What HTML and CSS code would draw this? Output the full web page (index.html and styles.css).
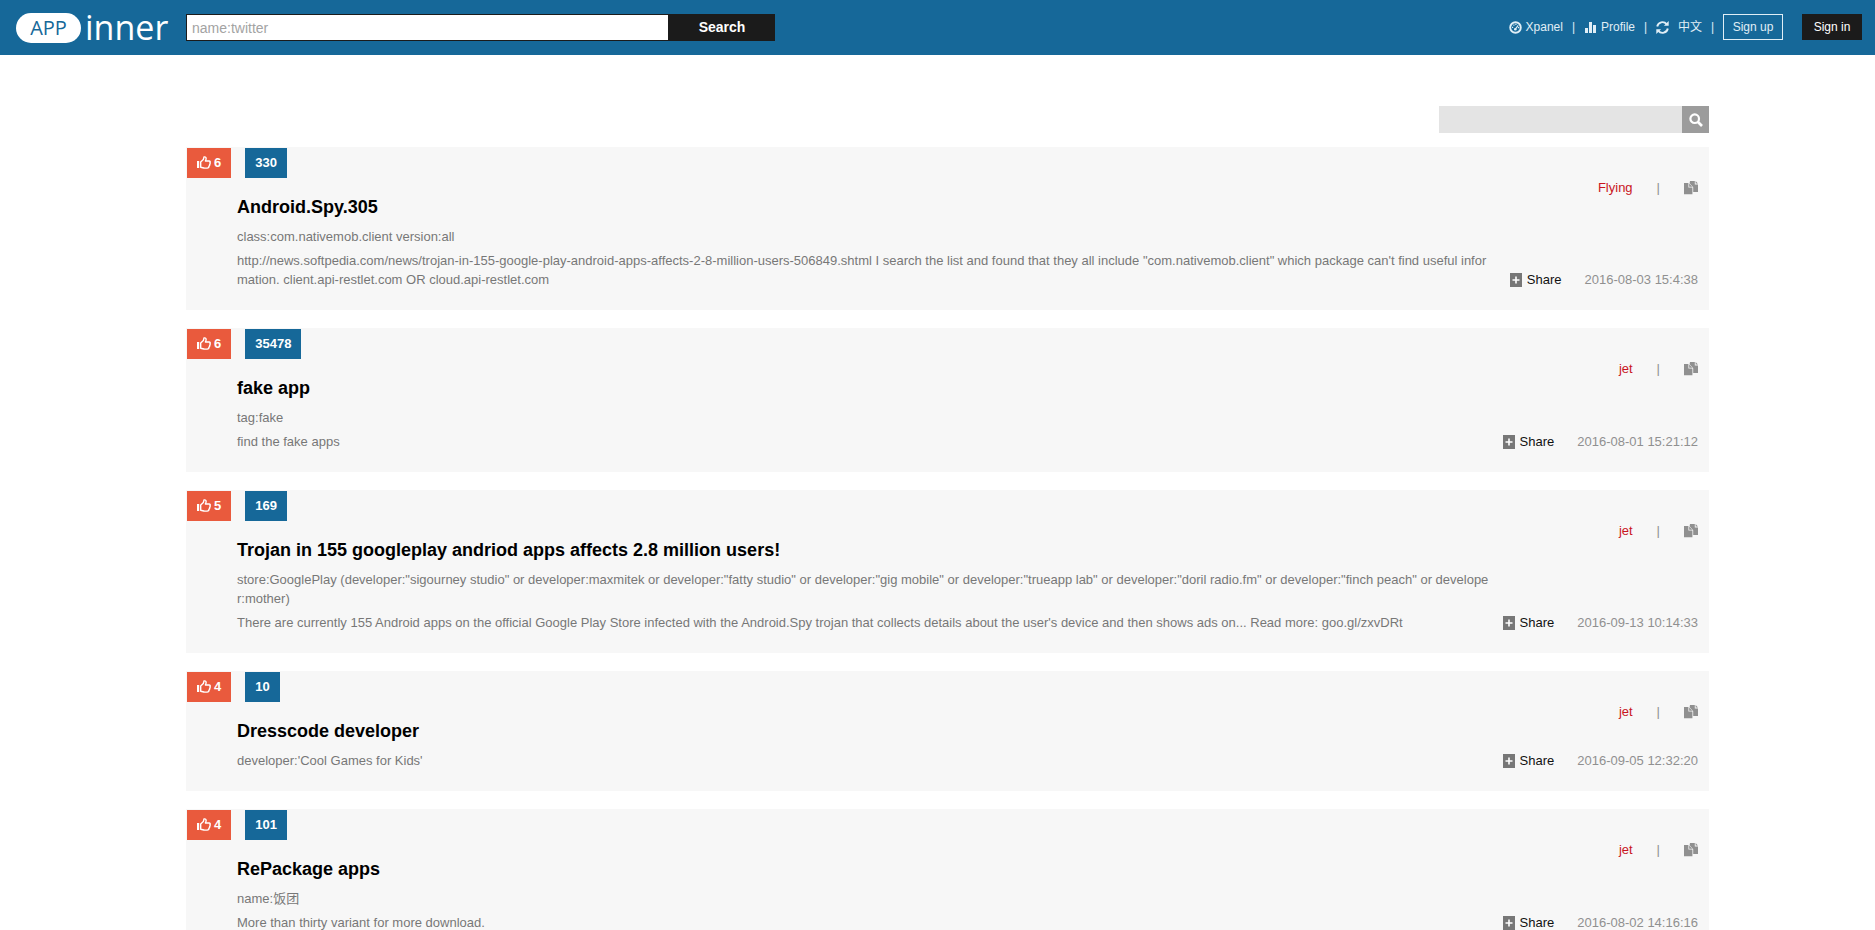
FILE: index.html
```html
<!DOCTYPE html>
<html lang="en">
<head>
<meta charset="utf-8">
<title>APP inner</title>
<link rel="stylesheet" href="styles.css">
</head>
<body>
<svg class="sprite" aria-hidden="true">
  <symbol id="i-thumb" viewBox="0 0 14 13"><path fill="currentColor" d="M0 5h2.200v7H0z"/><path fill="none" stroke="currentColor" stroke-width="1.400" stroke-linejoin="round" d="M3.700 6 6.300 3.600 7 1C8.700.600 9.400 1.800 9 3.300L8.400 5h3.700c1.200 0 1.400 1.200.8 1.800.4.600.2 1.400-.3 1.700.2.700 0 1.300-.600 1.600 0 1.400-.700 2-1.800 2H7.600C6.200 12 5.400 11.400 3.700 11.300z"/></symbol>
  <symbol id="i-copy" viewBox="0 0 14 14"><path fill="#909090" d="M6 0h4.800v3.400H14V11H9.200V6.200L5.600 2.200z"/><path fill="#909090" d="M11.600 0 14 2.600h-2.400z"/><path fill="#909090" d="M0 2h4.400v4.600h4V13.300H0z"/><path fill="#909090" d="m5.200 2.500 3.200 3.300H5.200z"/></symbol>
  <symbol id="i-plus" viewBox="0 0 12 14"><path fill="#777" d="M0 0h12v14H0z"/><path fill="#fff" d="M5.200 3.500h1.600v2.700h2.700v1.600H6.800v2.700H5.200V7.800H2.500V6.200h2.700z"/></symbol>
</svg>

<header class="topbar">
  <a class="logo" href="#"><span class="logo-pill">APP</span><span class="logo-word">inner</span></a>
  <form class="search">
    <input class="search-input" type="text" aria-label="Search apps" placeholder="name:twitter">
    <button class="search-button" type="submit">Search</button>
  </form>
  <nav class="nav">
    <a class="nav-link" href="#"><svg class="nav-icon" viewBox="0 0 13 13"><circle cx="6.500" cy="6.500" r="5.300" fill="none" stroke="currentColor" stroke-width="1.900"/><path d="M6 8.500 9.200 4.300" stroke="currentColor" stroke-width="1.200"/><circle cx="6.300" cy="8.300" r="1.300" fill="currentColor"/><path fill="currentColor" d="M3 5.700h1.200v1.200H3zM4.300 3.500h1.200v1.200H4.300zM6.300 2.800h1.200V4H6.300zM9 6h1.200v1.200H9z"/></svg>Xpanel</a>
    <span class="bar">|</span>
    <a class="nav-link" href="#"><svg class="nav-icon" viewBox="0 0 13 13"><path fill="currentColor" d="M1 7h3v5H1zM5 1h3v11H5zM9 4h3v8H9z"/></svg>Profile</a>
    <span class="bar">|</span>
    <a class="nav-link nav-lang" href="#"><svg class="nav-icon" viewBox="0 0 13 13"><path fill="none" stroke="currentColor" stroke-width="1.900" d="M1.200 5.500A5.300 5.300 0 0 1 10.600 3.200M11.800 7.500A5.300 5.300 0 0 1 2.400 9.800"/><path fill="currentColor" d="M12.700 0v4.800H7.900zM.300 13V8.200h4.800z"/></svg>中文</a>
    <span class="bar">|</span>
    <a class="box sign-up" href="#">Sign up</a>
    <a class="box sign-in" href="#">Sign in</a>
  </nav>
</header>

<main class="page">
  <form class="filter">
    <input class="filter-input" type="text" aria-label="Filter rules">
    <button class="filter-button" type="submit" aria-label="Find"><svg width="14" height="14" viewBox="0 0 14 14"><circle cx="5.700" cy="5.700" r="4.300" fill="none" stroke="#fff" stroke-width="2.200"/><path d="m9 9 4 4" stroke="#fff" stroke-width="2.600"/></svg></button>
  </form>

  <article class="card">
    <div class="card-main">
      <div class="badges"><button class="badge like"><svg class="thumb"><use href="#i-thumb"/></svg>6</button><a class="badge count" href="#">330</a></div>
      <div class="card-text">
        <h2>Android.Spy.305</h2>
        <p>class:com.nativemob.client version:all</p>
        <p>http://news.softpedia.com/news/trojan-in-155-google-play-android-apps-affects-2-8-million-users-506849.shtml I search the list and found that they all include "com.nativemob.client" which package can't find useful information. client.api-restlet.com OR cloud.api-restlet.com</p>
      </div>
    </div>
    <div class="card-side">
      <div class="side-top"><a class="author" href="#">Flying</a><span>|</span><button class="copy" aria-label="Copy"><svg width="14" height="14"><use href="#i-copy"/></svg></button></div>
      <div class="side-bottom"><a class="share" href="#"><svg width="12" height="14"><use href="#i-plus"/></svg>Share</a><time>2016-08-03 15:4:38</time></div>
    </div>
  </article>

  <article class="card">
    <div class="card-main">
      <div class="badges"><button class="badge like"><svg class="thumb"><use href="#i-thumb"/></svg>6</button><a class="badge count" href="#">35478</a></div>
      <div class="card-text">
        <h2>fake app</h2>
        <p>tag:fake</p>
        <p>find the fake apps</p>
      </div>
    </div>
    <div class="card-side">
      <div class="side-top"><a class="author" href="#">jet</a><span>|</span><button class="copy" aria-label="Copy"><svg width="14" height="14"><use href="#i-copy"/></svg></button></div>
      <div class="side-bottom"><a class="share" href="#"><svg width="12" height="14"><use href="#i-plus"/></svg>Share</a><time>2016-08-01 15:21:12</time></div>
    </div>
  </article>

  <article class="card">
    <div class="card-main">
      <div class="badges"><button class="badge like"><svg class="thumb"><use href="#i-thumb"/></svg>5</button><a class="badge count" href="#">169</a></div>
      <div class="card-text">
        <h2>Trojan in 155 googleplay andriod apps affects 2.8 million users!</h2>
        <p>store:GooglePlay (developer:"sigourney studio" or developer:maxmitek or developer:"fatty studio" or developer:"gig mobile" or developer:"trueapp lab" or developer:"doril radio.fm" or developer:"finch peach" or developer:mother)</p>
        <p>There are currently 155 Android apps on the official Google Play Store infected with the Android.Spy trojan that collects details about the user's device and then shows ads on... Read more: goo.gl/zxvDRt</p>
      </div>
    </div>
    <div class="card-side">
      <div class="side-top"><a class="author" href="#">jet</a><span>|</span><button class="copy" aria-label="Copy"><svg width="14" height="14"><use href="#i-copy"/></svg></button></div>
      <div class="side-bottom"><a class="share" href="#"><svg width="12" height="14"><use href="#i-plus"/></svg>Share</a><time>2016-09-13 10:14:33</time></div>
    </div>
  </article>

  <article class="card">
    <div class="card-main">
      <div class="badges"><button class="badge like"><svg class="thumb"><use href="#i-thumb"/></svg>4</button><a class="badge count" href="#">10</a></div>
      <div class="card-text">
        <h2>Dresscode developer</h2>
        <p>developer:'Cool Games for Kids'</p>
      </div>
    </div>
    <div class="card-side">
      <div class="side-top"><a class="author" href="#">jet</a><span>|</span><button class="copy" aria-label="Copy"><svg width="14" height="14"><use href="#i-copy"/></svg></button></div>
      <div class="side-bottom"><a class="share" href="#"><svg width="12" height="14"><use href="#i-plus"/></svg>Share</a><time>2016-09-05 12:32:20</time></div>
    </div>
  </article>

  <article class="card">
    <div class="card-main">
      <div class="badges"><button class="badge like"><svg class="thumb"><use href="#i-thumb"/></svg>4</button><a class="badge count" href="#">101</a></div>
      <div class="card-text">
        <h2>RePackage apps</h2>
        <p>name:饭团</p>
        <p>More than thirty variant for more download.</p>
      </div>
    </div>
    <div class="card-side">
      <div class="side-top"><a class="author" href="#">jet</a><span>|</span><button class="copy" aria-label="Copy"><svg width="14" height="14"><use href="#i-copy"/></svg></button></div>
      <div class="side-bottom"><a class="share" href="#"><svg width="12" height="14"><use href="#i-plus"/></svg>Share</a><time>2016-08-02 14:16:16</time></div>
    </div>
  </article>
</main>
</body>
</html>
```
FILE: styles.css
```css
* { box-sizing: border-box; }
html { scrollbar-width: none; }
body {
  margin: 0;
  background: #fff;
  color: #777;
  font: 13px/19px "Liberation Sans", Arial, "Noto Sans CJK SC", sans-serif;
}
a { color: inherit; text-decoration: none; }
button { border: 0; padding: 0; font: inherit; cursor: pointer; }
.sprite { position: absolute; width: 0; height: 0; }

.topbar {
  display: flex;
  align-items: flex-start;
  height: 55px;
  padding: 13px 13px 0 16px;
  background: #166899;
  color: #fff;
}
.logo { display: flex; width: 170px; gap: 4px; flex: none; }
.logo-pill {
  width: 65px;
  height: 30px;
  border-radius: 15px;
  background: #fff;
  color: #166899;
  font: 20px/30px "Open Sans", sans-serif;
  text-align: center;
}
.logo-word { font: 34px/28px "Open Sans", sans-serif; }
.search { display: flex; margin-top: 1px; width: 589px; height: 27px; }
.search-input {
  flex: 1;
  min-width: 0;
  border: 1px solid #1b1b1b;
  padding: 0 5px;
  background: #fff;
  font: 14px "Liberation Sans", Arial, sans-serif;
  outline: 0;
}
.search-input::placeholder { color: #a3a3a3; }
.search-button { width: 106px; background: #1b1b1b; color: #fff; font-weight: bold; font-size: 14px; }
.nav {
  display: flex;
  align-items: center;
  margin: 1px 0 0 auto;
  font-size: 12px;
  line-height: 26px;
  color: #e0eef6;
}
.nav-link { display: flex; align-items: center; gap: 4px; }
.nav-icon { width: 13px; height: 13px; }
.nav-lang { gap: 9px; }
.bar { width: 21px; text-align: center; }
.box { width: 60px; height: 26px; text-align: center; line-height: 24px; border: 1px solid #e0eef6; }
.sign-in { margin-left: 19px; background: #1b1b1b; border-color: #1b1b1b; color: #fff; }

.page { padding: 51px 166px 0 186px; }
.filter { display: flex; justify-content: flex-end; margin-bottom: 14px; }
.filter-input { width: 243px; height: 27px; border: 0; background: #e4e4e4; outline: 0; }
.filter-button { display: flex; align-items: center; justify-content: center; width: 27px; background: #9c9c9c; }

.card {
  display: flex;
  gap: 8px;
  margin-bottom: 18px;
  background: #f7f7f7;
}
.card-main { flex: 1; min-width: 0; padding: 1px 0 21px 1px; }
.badges { display: flex; gap: 14px; }
.badge {
  display: flex;
  align-items: center;
  height: 30px;
  padding: 0 10px 2px;
  color: #fff;
  font-size: 13px;
  font-weight: bold;
}
.like { gap: 3px; background: #e95a3d; }
.count { background: #166899; }
.thumb { width: 14px; height: 13px; }
.card-text { padding: 17px 0 0 50px; word-break: break-all; }
.card-text h2 { margin: 0 0 8px; color: #000; font-size: 18px; line-height: 24px; }
.card-text p { margin: 0 0 5px; }
.card-text p:last-child { margin-bottom: 0; }

.card-side {
  display: flex;
  flex-direction: column;
  justify-content: space-between;
  width: 207px;
  padding: 31px 11px 21px 0;
  color: #909090;
}
.side-top, .side-bottom { display: flex; justify-content: flex-end; align-items: center; }
.side-top { gap: 24px; }
.author { color: #c9151e; }
.copy { display: flex; background: none; }
.side-bottom { gap: 23px; white-space: nowrap; }
.share { display: flex; align-items: center; gap: 5px; color: #111; }
```
